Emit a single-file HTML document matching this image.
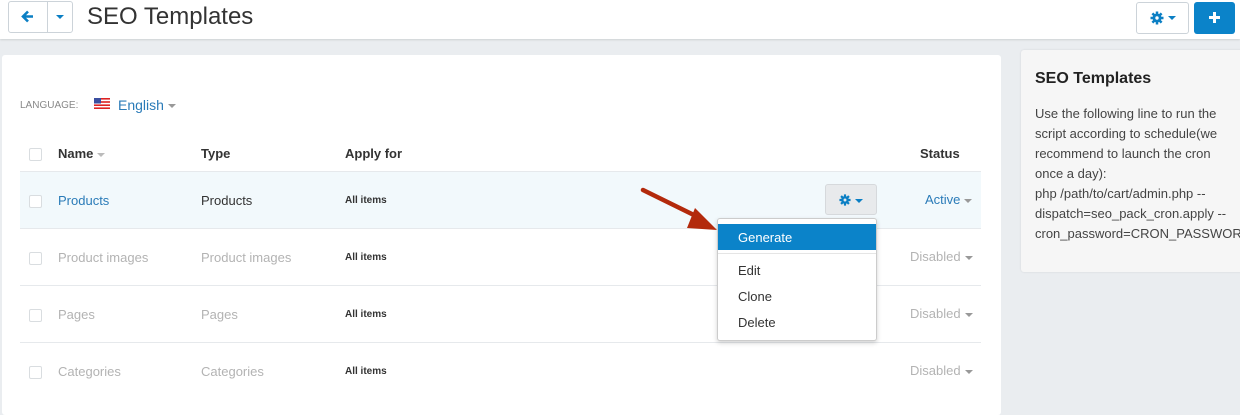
<!DOCTYPE html>
<html><head><style>
*{box-sizing:border-box;margin:0;padding:0}
body{width:1240px;height:408px;overflow:hidden;background:#eaedf0;font-family:"Liberation Sans",sans-serif;font-size:13px;color:#333;position:relative}
.hdr{position:absolute;left:0;top:0;width:1240px;height:39px;background:#fff;box-shadow:0 1px 2px rgba(0,0,0,.12)}
.btn{position:absolute;border:1px solid #ccd3d9;border-radius:3px;background:#fff}
.main{position:absolute;left:2px;top:55px;width:999px;height:360px;background:#fff;border-radius:3px}
.side{position:absolute;left:1021px;top:50px;width:230px;height:222px;background:#f6f6f6;border-radius:3px;box-shadow:0 0 2px rgba(0,0,0,.1)}
.t{position:absolute;white-space:nowrap}
.cb{position:absolute;left:29px;width:13px;height:13px;border:1px solid #d9dde0;border-radius:2px;background:#fff}
.row{position:absolute;left:20px;width:961px;height:57px;border-top:1px solid #e6e9ec}
.caret{display:inline-block;width:0;height:0;border-left:4px solid transparent;border-right:4px solid transparent;border-top:4px solid #999;vertical-align:middle;margin-left:4px}
.gray{color:#b3b3b3}
.ai{font-size:10px;font-weight:bold}
</style></head><body>
<div class="hdr">
 <div class="btn" style="left:8px;top:1px;width:65px;height:32px"></div>
 <div style="position:absolute;left:47px;top:2px;width:1px;height:30px;background:#ccd3d9"></div>
 <svg style="position:absolute;left:21px;top:10px" width="13" height="13" viewBox="0 0 13 13"><path d="M7 1.5 2 6.5 7 11.5M2.5 6.5H12" stroke="#0b7fc4" stroke-width="2.6" fill="none"/></svg>
 <div style="position:absolute;left:56px;top:15px;border-left:4px solid transparent;border-right:4px solid transparent;border-top:4px solid #0b7fc4"></div>
 <div class="t" style="left:87px;top:3px;font-size:24px;color:#333">SEO Templates</div>
 <div class="btn" style="left:1136px;top:2px;width:53px;height:32px"></div>
 <svg style="position:absolute;left:1150px;top:11px" width="14" height="14" viewBox="0 0 14 14"><circle cx="7" cy="7" r="4.5" fill="#0b7fc4"/><g stroke="#0b7fc4" stroke-width="2.5"><path d="M7 0.5v13M0.5 7h13M2.4 2.4l9.2 9.2M11.6 2.4l-9.2 9.2"/></g><circle cx="7" cy="7" r="1.7" fill="#fff"/></svg>
 <div style="position:absolute;left:1168px;top:16px;border-left:4px solid transparent;border-right:4px solid transparent;border-top:4px solid #0b7fc4"></div>
 <div style="position:absolute;left:1194px;top:2px;width:41px;height:32px;background:#0b83c9;border-radius:3px"></div>
 <div style="position:absolute;left:1209px;top:16px;width:11px;height:3px;background:#fff"></div>
 <div style="position:absolute;left:1213px;top:12px;width:3px;height:11px;background:#fff"></div>
</div>
<div class="main"></div>
<div class="t" style="left:20px;top:100px;font-size:10px;color:#888">LANGUAGE:</div>
<svg style="position:absolute;left:94px;top:98px" width="16" height="11" viewBox="0 0 16 11"><rect width="16" height="11" fill="#fff"/><g fill="#d22"><rect y="0" width="16" height="1.6"/><rect y="3.2" width="16" height="1.6"/><rect y="6.4" width="16" height="1.6"/><rect y="9.4" width="16" height="1.6"/></g><rect width="7" height="5.5" fill="#3b4fa0"/></svg>
<div class="t" style="left:118px;top:97px;font-size:14px;color:#2a7bb8">English<span class="caret"></span></div>

<div class="cb" style="top:148px"></div>
<div class="t" style="left:58px;top:146px;font-weight:bold;color:#333;font-size:13px">Name<span class="caret" style="border-top-color:#bbb"></span></div>
<div class="t" style="left:201px;top:146px;font-weight:bold">Type</div>
<div class="t" style="left:345px;top:146px;font-weight:bold">Apply for</div>
<div class="t" style="left:920px;top:146px;font-weight:bold">Status</div>

<div class="row" style="top:171px;background:#f2f9fc"></div>
<div class="row" style="top:228px"></div>
<div class="row" style="top:285px"></div>
<div class="row" style="top:342px"></div>

<div class="cb" style="top:195px"></div>
<div class="t" style="left:58px;top:193px;color:#2a7bb8">Products</div>
<div class="t" style="left:201px;top:193px">Products</div>
<div class="t ai" style="left:345px;top:195px">All items</div>
<div class="t" style="left:925px;top:192px;color:#2a7bb8">Active<span class="caret"></span></div>
<div style="position:absolute;left:825px;top:184px;width:52px;height:31px;background:#e8eaec;border:1px solid #d6d9dc;border-radius:3px"></div>
<svg style="position:absolute;left:839px;top:194px" width="12" height="12" viewBox="0 0 14 14"><circle cx="7" cy="7" r="4.5" fill="#0b7fc4"/><g stroke="#0b7fc4" stroke-width="2.5"><path d="M7 0.5v13M0.5 7h13M2.4 2.4l9.2 9.2M11.6 2.4l-9.2 9.2"/></g><circle cx="7" cy="7" r="1.7" fill="#e8eaec"/></svg>
<div style="position:absolute;left:855px;top:199px;border-left:4px solid transparent;border-right:4px solid transparent;border-top:4px solid #0b7fc4"></div>

<div class="cb" style="top:252px"></div>
<div class="t gray" style="left:58px;top:250px">Product images</div>
<div class="t gray" style="left:201px;top:250px">Product images</div>
<div class="t ai" style="left:345px;top:252px">All items</div>
<div class="t gray" style="left:910px;top:249px">Disabled<span class="caret"></span></div>

<div class="cb" style="top:309px"></div>
<div class="t gray" style="left:58px;top:307px">Pages</div>
<div class="t gray" style="left:201px;top:307px">Pages</div>
<div class="t ai" style="left:345px;top:309px">All items</div>
<div class="t gray" style="left:910px;top:306px">Disabled<span class="caret"></span></div>

<div class="cb" style="top:366px"></div>
<div class="t gray" style="left:58px;top:364px">Categories</div>
<div class="t gray" style="left:201px;top:364px">Categories</div>
<div class="t ai" style="left:345px;top:366px">All items</div>
<div class="t gray" style="left:910px;top:363px">Disabled<span class="caret"></span></div>

<div style="position:absolute;left:717px;top:218px;width:160px;height:123px;background:#fff;border:1px solid #ccc;border-radius:3px;box-shadow:0 2px 5px rgba(0,0,0,.18)"></div>
<div style="position:absolute;left:718px;top:224px;width:158px;height:26px;background:#0b83c9"></div>
<div class="t" style="left:738px;top:230px;color:#fff">Generate</div>
<div style="position:absolute;left:718px;top:253px;width:158px;height:1px;background:#e5e5e5"></div>
<div class="t" style="left:738px;top:263px">Edit</div>
<div class="t" style="left:738px;top:289px">Clone</div>
<div class="t" style="left:738px;top:315px">Delete</div>

<svg style="position:absolute;left:640px;top:186px" width="80" height="50" viewBox="0 0 80 50"><path d="M3 4 L62 33" stroke="#b32a0c" stroke-width="4.5" stroke-linecap="round"/><path d="M55 22 L77 44 L47 42 Z" fill="#b32a0c"/></svg>

<div class="side"></div>
<div class="t" style="left:1035px;top:70px;font-size:16px;font-weight:bold;color:#222">SEO Templates</div>
<div style="position:absolute;left:1035px;top:104px;width:200px;font-size:13px;line-height:20px;color:#444">Use the following line to run the script according to schedule(we recommend to launch the cron once a day):<br>php /path/to/cart/admin.php --<br>dispatch=seo_pack_cron.apply --<br><span style="white-space:nowrap">cron_password=CRON_PASSWORD</span></div>
</body></html>
